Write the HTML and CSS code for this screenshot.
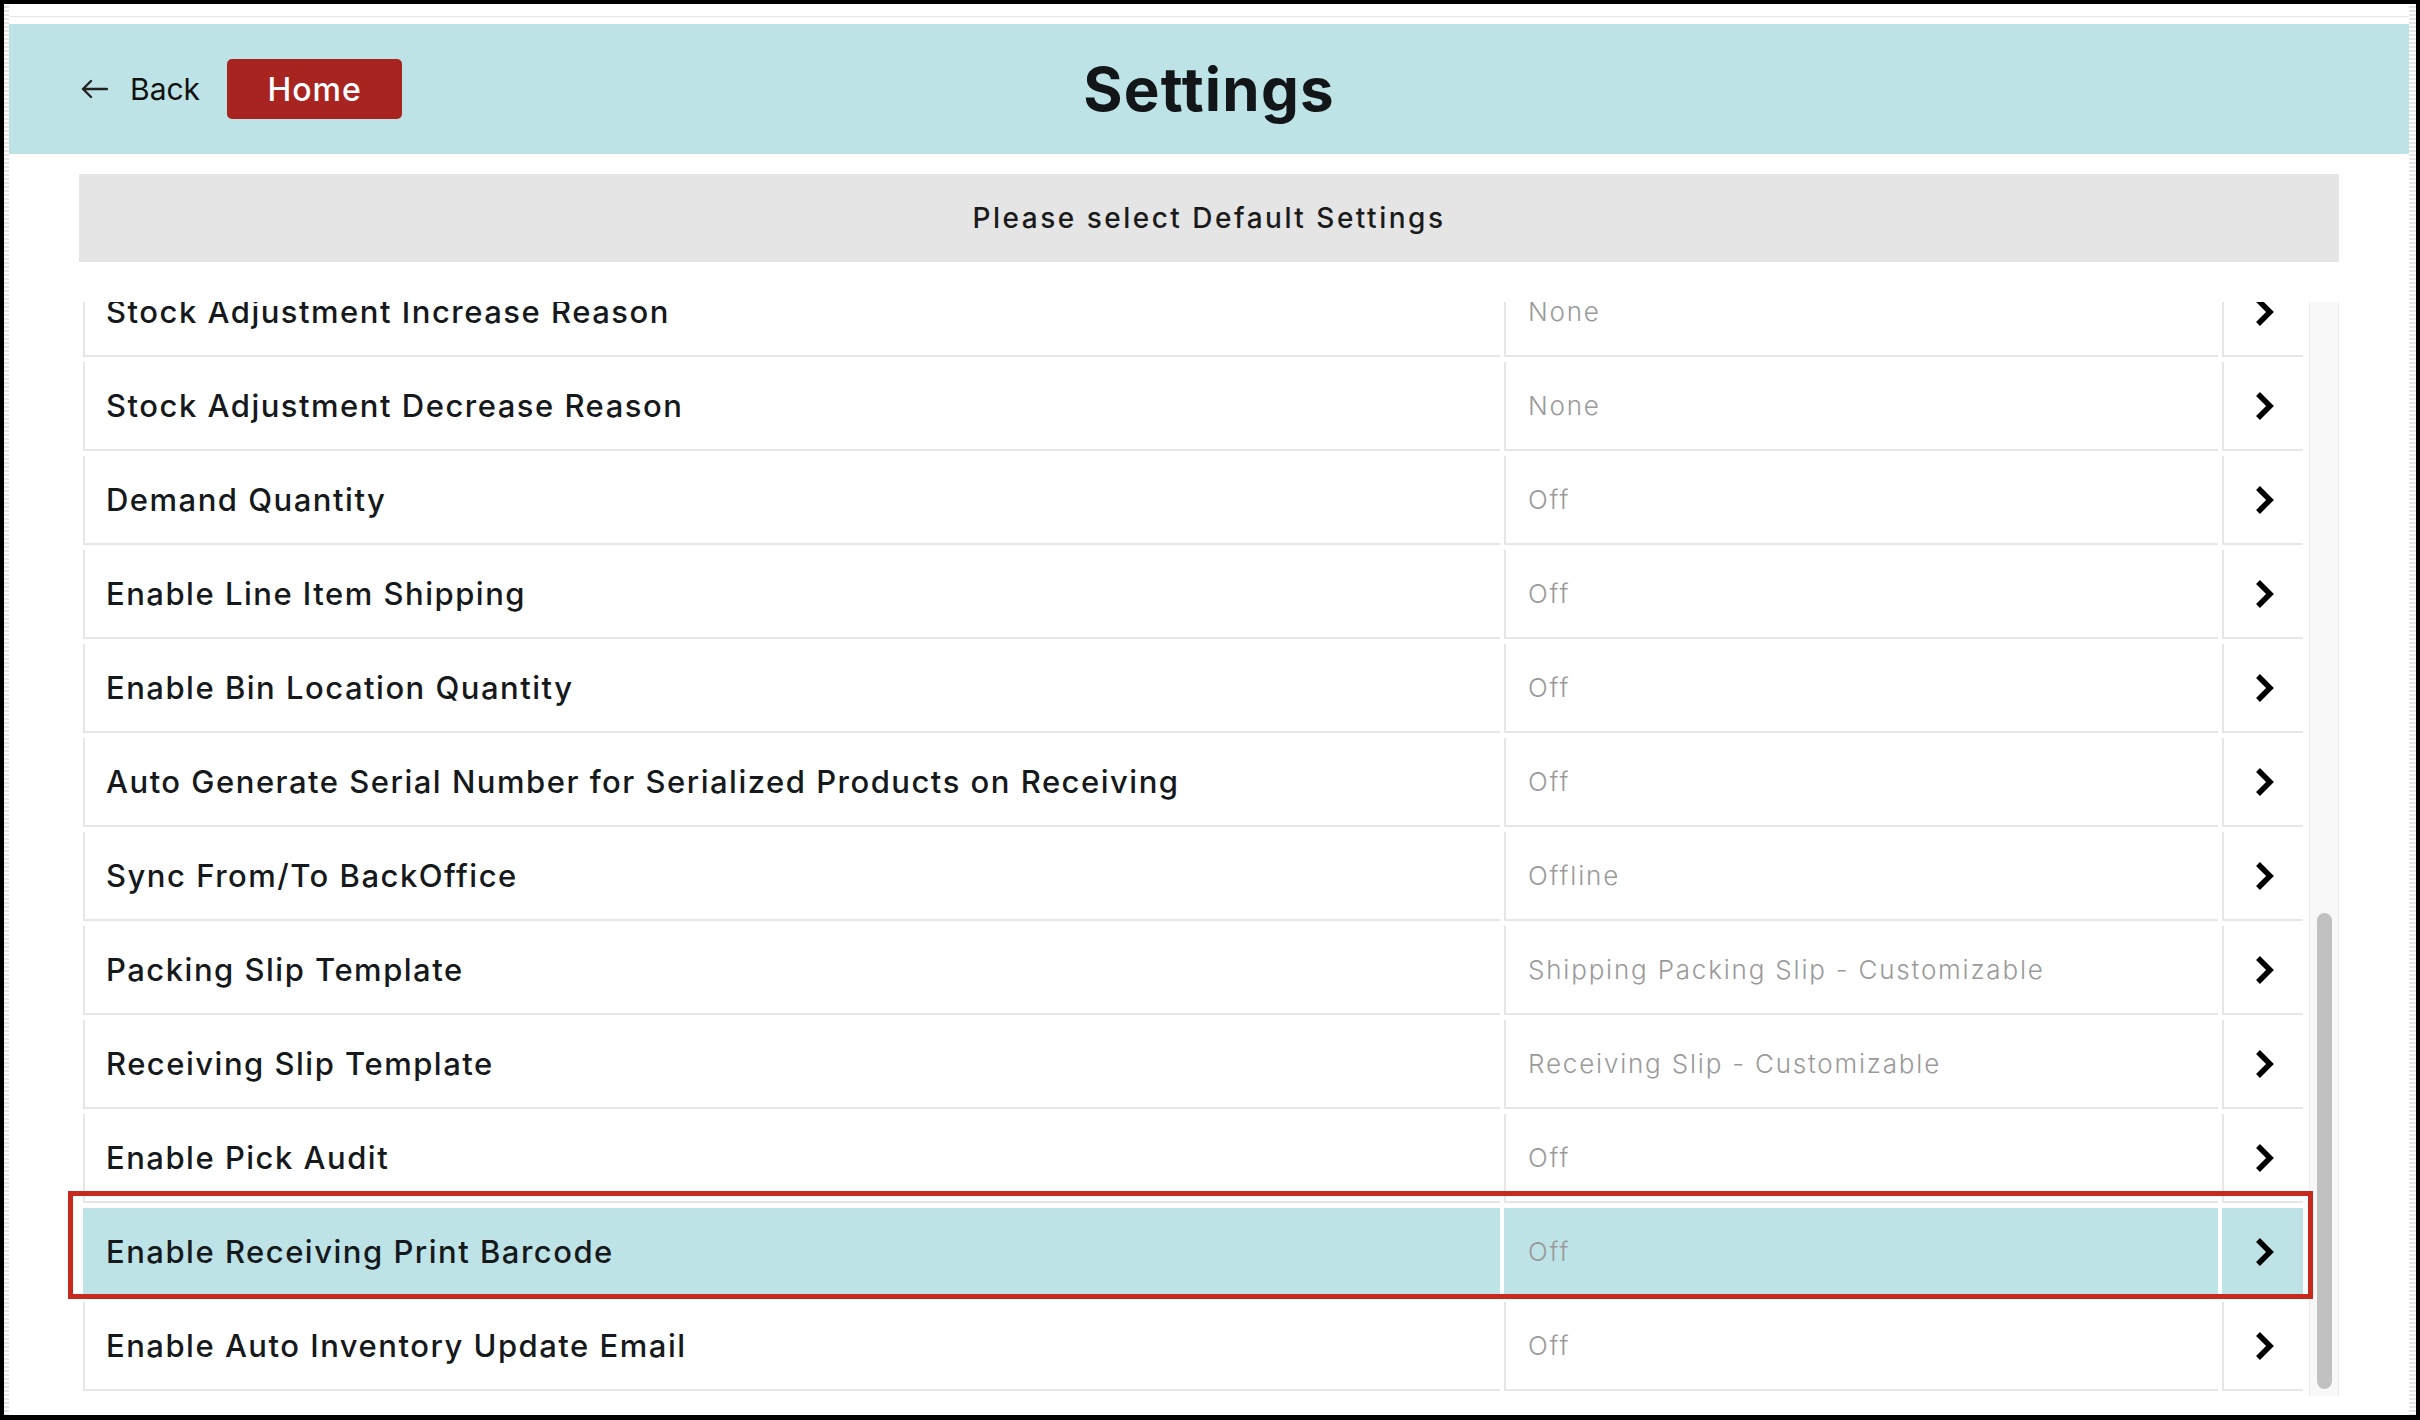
FILE: index.html
```html
<!DOCTYPE html>
<html>
    <head>
        <title>Settings</title>
        <link rel="stylesheet" href="styles.css">
    </head>
    <body>
        <div class="frame">
            <div class="screen">
                <div class="topline"></div>

                <div class="header">
                    <div class="nav">
                        <a class="back">
                            <svg width="28" height="20" viewBox="0 0 28 20">
                                <path d="M27 10 H3 M11 2 L3 10 L11 18" fill="none" stroke="#222" stroke-width="2.4" stroke-linecap="round" stroke-linejoin="round"/>
                            </svg>
                            <span>Back</span>
                        </a>
                        <button type="button" class="home">Home</button>
                    </div>
                    <h1>Settings</h1>
                    <div></div>
                </div>

                <div class="subheader">Please select Default Settings</div>

                <div class="list-wrap">
                    <div class="list">
                        <div class="rows">
                            <div class="row">
                                <div class="cell name">Stock Adjustment Increase Reason</div>
                                <div class="cell value">None</div>
                                <div class="cell arrow"><svg class="chev" viewBox="0 0 22 30"><path d="M5 3 L17 15 L5 27"/></svg></div>
                            </div>
                            <div class="row">
                                <div class="cell name">Stock Adjustment Decrease Reason</div>
                                <div class="cell value">None</div>
                                <div class="cell arrow"><svg class="chev" viewBox="0 0 22 30"><path d="M5 3 L17 15 L5 27"/></svg></div>
                            </div>
                            <div class="row">
                                <div class="cell name">Demand Quantity</div>
                                <div class="cell value">Off</div>
                                <div class="cell arrow"><svg class="chev" viewBox="0 0 22 30"><path d="M5 3 L17 15 L5 27"/></svg></div>
                            </div>
                            <div class="row">
                                <div class="cell name">Enable Line Item Shipping</div>
                                <div class="cell value">Off</div>
                                <div class="cell arrow"><svg class="chev" viewBox="0 0 22 30"><path d="M5 3 L17 15 L5 27"/></svg></div>
                            </div>
                            <div class="row">
                                <div class="cell name">Enable Bin Location Quantity</div>
                                <div class="cell value">Off</div>
                                <div class="cell arrow"><svg class="chev" viewBox="0 0 22 30"><path d="M5 3 L17 15 L5 27"/></svg></div>
                            </div>
                            <div class="row">
                                <div class="cell name">Auto Generate Serial Number for Serialized Products on Receiving</div>
                                <div class="cell value">Off</div>
                                <div class="cell arrow"><svg class="chev" viewBox="0 0 22 30"><path d="M5 3 L17 15 L5 27"/></svg></div>
                            </div>
                            <div class="row">
                                <div class="cell name">Sync From/To BackOffice</div>
                                <div class="cell value">Offline</div>
                                <div class="cell arrow"><svg class="chev" viewBox="0 0 22 30"><path d="M5 3 L17 15 L5 27"/></svg></div>
                            </div>
                            <div class="row">
                                <div class="cell name">Packing Slip Template</div>
                                <div class="cell value">Shipping Packing Slip - Customizable</div>
                                <div class="cell arrow"><svg class="chev" viewBox="0 0 22 30"><path d="M5 3 L17 15 L5 27"/></svg></div>
                            </div>
                            <div class="row">
                                <div class="cell name">Receiving Slip Template</div>
                                <div class="cell value">Receiving Slip - Customizable</div>
                                <div class="cell arrow"><svg class="chev" viewBox="0 0 22 30"><path d="M5 3 L17 15 L5 27"/></svg></div>
                            </div>
                            <div class="row">
                                <div class="cell name">Enable Pick Audit</div>
                                <div class="cell value">Off</div>
                                <div class="cell arrow"><svg class="chev" viewBox="0 0 22 30"><path d="M5 3 L17 15 L5 27"/></svg></div>
                            </div>
                            <div class="row selected">
                                <div class="cell name">Enable Receiving Print Barcode</div>
                                <div class="cell value">Off</div>
                                <div class="cell arrow"><svg class="chev" viewBox="0 0 22 30"><path d="M5 3 L17 15 L5 27"/></svg></div>
                            </div>
                            <div class="row">
                                <div class="cell name">Enable Auto Inventory Update Email</div>
                                <div class="cell value">Off</div>
                                <div class="cell arrow"><svg class="chev" viewBox="0 0 22 30"><path d="M5 3 L17 15 L5 27"/></svg></div>
                            </div>
                        </div>
                    </div>
                    <div class="scrollbar"><div class="thumb"></div></div>
                </div>
            </div>
        </div>
    </body>
</html>
```

FILE: styles.css
```css
html, body {
    margin: 0;
    background: #000;
}
body {
    font-family: Inter, "Open Sans", sans-serif;
    color: #16191b;
}
.frame {
    margin: 4px 4px 5px;
    height: 1411px;
    display: flex;
    padding: 0 7px 0 5px;
    background: repeating-linear-gradient(#fff 0 2px, #e4e4e4 2px 4px);
}
.screen {
    flex: 1;
    background: #fff;
    display: flex;
    flex-direction: column;
}
.topline {
    height: 12px;
    border-bottom: 1px solid #e6e6e6;
    margin-bottom: 7px;
}

/* top bar */
.header {
    height: 130px;
    background: #bde3e6;
    display: grid;
    grid-template-columns: 1fr auto 1fr;
    align-items: center;
    padding: 0 71px;
}
.nav {
    display: flex;
    align-items: center;
}
.back {
    display: flex;
    align-items: center;
    gap: 22px;
    font-size: 30px;
    color: #111;
    cursor: pointer;
}
.home {
    margin-left: 27px;
    width: 175px;
    height: 60px;
    background: #a82421;
    color: #fff;
    border: none;
    border-radius: 5px;
    font-family: inherit;
    font-size: 32px;
    font-weight: 500;
    letter-spacing: 1px;
    cursor: pointer;
}
.header h1 {
    margin: 0;
    font-size: 60px;
    font-weight: 700;
    letter-spacing: 1.2px;
    color: #121619;
}

.subheader {
    margin: 20px 70px 0;
    height: 88px;
    background: #e5e5e5;
    display: flex;
    align-items: center;
    justify-content: center;
    font-size: 28px;
    font-weight: 500;
    letter-spacing: 2.5px;
    color: #1b1b1b;
}

/* settings list */
.list-wrap {
    margin: 40px 70px 0;
    height: 1094px;
    padding-left: 4px;
    display: flex;
    gap: 6px;
}
.list {
    width: 2220px;
    clip-path: inset(0 -40px 0 -40px);
}
.rows {
    margin-top: -34px;
}
.row {
    display: grid;
    grid-template-columns: 1417px 714px 81px;
    column-gap: 4px;
    height: 89px;
    margin-bottom: 5px;
}
.cell {
    box-sizing: border-box;
    border-left: 2px solid #e6e6e6;
    border-bottom: 2px solid #e6e6e6;
    display: flex;
    align-items: center;
    white-space: nowrap;
}
.name {
    padding-left: 21px;
    font-size: 31px;
    font-weight: 500;
    letter-spacing: 1.5px;
}
.value {
    padding-left: 22px;
    font-size: 26px;
    font-weight: 300;
    letter-spacing: 1.8px;
    color: #9a9a9a;
}
.arrow {
    justify-content: center;
}
.chev {
    width: 22px;
    height: 30px;
    fill: none;
    stroke: #000;
    stroke-width: 5.5;
    stroke-linejoin: miter;
}
.row.selected {
    position: relative;
}
.row.selected .cell {
    background: #bde3e6;
    border-color: #bde3e6;
}
.row.selected::after {
    content: "";
    position: absolute;
    left: -15px;
    right: -10px;
    top: -17px;
    bottom: -2px;
    border: 5px solid #c8291f;
}

.scrollbar {
    width: 30px;
    box-sizing: border-box;
    background: #f8f8f8;
    border-left: 1px solid #ececec;
    border-right: 1px solid #ececec;
    padding-top: 611px;
}
.thumb {
    width: 15px;
    height: 476px;
    margin: 0 auto;
    border-radius: 8px;
    background: #c1c1c1;
}
```
